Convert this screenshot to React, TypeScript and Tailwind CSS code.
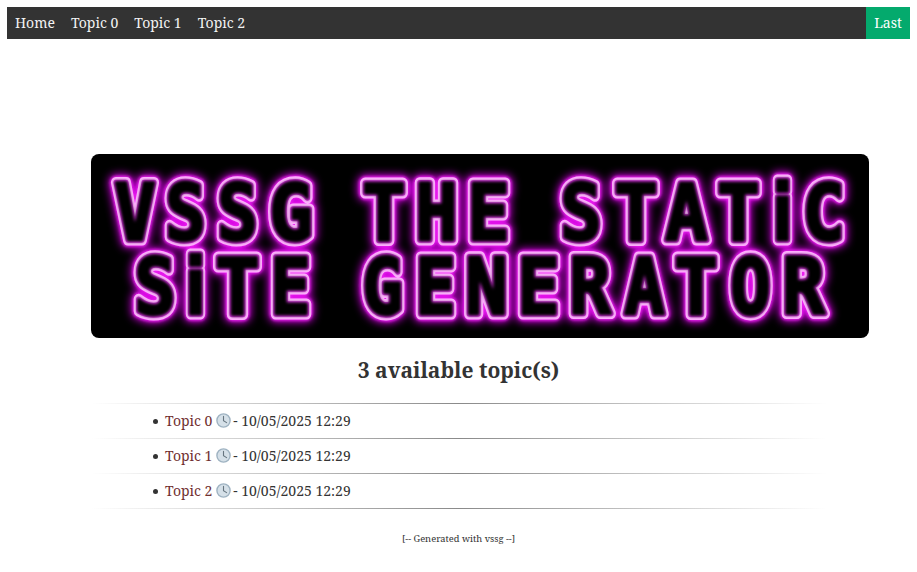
import React from "react";

const topics = ["Topic 0", "Topic 1", "Topic 2"];

// letter, left edge, right edge of the neon tube in the banner (page px minus banner origin)
const lineOne: [string, number, number][] = [
  ["V", 21, 67], ["S", 72, 117], ["S", 124, 169], ["G", 176, 224],
  ["T", 269, 317], ["H", 322, 369], ["E", 374, 421],
  ["S", 467, 513], ["T", 521, 569], ["A", 572, 619], ["T", 624, 671], ["i", 679, 704], ["C", 709, 756],
];
const lineTwo: [string, number, number][] = [
  ["S", 41, 87], ["i", 92, 117], ["T", 122, 171], ["E", 177, 222],
  ["G", 269, 314], ["E", 322, 367], ["N", 372, 419], ["E", 424, 471], ["R", 476, 522],
  ["A", 531, 576], ["T", 581, 629], ["O", 637, 682], ["R", 689, 736],
];

function NeonLine({ letters, y }: { letters: [string, number, number][]; y: number }) {
  return (
    <>
      {letters.map(([ch, left, right], i) => (
        <text
          key={i}
          x={left + 2}
          y={y}
          textLength={right - left - 4}
          lengthAdjust="spacingAndGlyphs"
          fontFamily={ch === "i" ? "'DejaVu Sans', sans-serif" : undefined}
        >
          {ch}
        </text>
      ))}
    </>
  );
}

function Banner() {
  return (
    <div className="ml-[84px] h-[184px] w-[778px] overflow-hidden rounded-lg bg-black">
      <svg width="778" height="184" viewBox="0 0 778 184" className="block">
        <defs>
          <filter id="halo" x="-10%" y="-10%" width="120%" height="120%">
            <feGaussianBlur stdDeviation="4" />
          </filter>
          <filter id="glow" x="-10%" y="-10%" width="120%" height="120%">
            <feGaussianBlur stdDeviation="1.4" />
          </filter>
          <filter id="soft" x="-10%" y="-10%" width="120%" height="120%">
            <feGaussianBlur stdDeviation="0.5" />
          </filter>
          <g id="neon" fontFamily="'DejaVu Sans Mono', monospace" fontWeight="700" fontSize="78" strokeLinejoin="round">
            <NeonLine letters={lineOne} y={86} />
            <NeonLine letters={lineTwo} y={160} />
          </g>
        </defs>
        <use href="#neon" fill="#000" stroke="#d000e0" strokeWidth="16" filter="url(#halo)" />
        <use href="#neon" fill="#000" stroke="#ec20f0" strokeWidth="13" filter="url(#glow)" />
        <use href="#neon" fill="#000" stroke="#ffb0ff" strokeWidth="11" filter="url(#soft)" />
        <use href="#neon" fill="#000" stroke="#e030e8" strokeWidth="5.6" filter="url(#soft)" />
        <use href="#neon" fill="#000" stroke="#000" strokeWidth="3.4" filter="url(#glow)" />
      </svg>
    </div>
  );
}

function ClockIcon() {
  return (
    <svg width="15" height="15" viewBox="0 0 15 15" className="mr-[-1.5px] inline-block align-[-2px]">
      <circle cx="7.5" cy="7.5" r="6.6" fill="#d5e0e8" stroke="#9fb3c2" strokeWidth="1.4" />
      <path d="M7.5 3.4V7.7L10.6 9.6" fill="none" stroke="#66757f" strokeWidth="1.1" strokeLinecap="round" />
    </svg>
  );
}

function Rule() {
  return <div className="mx-auto h-px w-[736px] bg-gradient-to-r from-transparent via-[#8a8a8a] to-transparent" />;
}

export default function App() {
  return (
    <div className="min-h-[572px] bg-white p-[7px] font-['Noto_Serif','DejaVu_Serif',serif] text-[14px] text-[#333]">
      <nav className="flex h-8 items-center bg-[#333] text-[#f2f2f2]">
        <a className="px-2 leading-8">Home</a>
        <a className="px-2 leading-8">Topic 0</a>
        <a className="px-2 leading-8">Topic 1</a>
        <a className="px-2 leading-8">Topic 2</a>
        <a className="ml-auto bg-[#04aa6d] px-2 leading-8 text-white">Last</a>
      </nav>

      <div className="pt-[115px]">
        <Banner />
      </div>

      <h1 className="mt-[17px] text-center text-[21px] font-bold leading-[30px]">3 available topic(s)</h1>

      <div className="mt-[18px]">
        <Rule />
        {topics.map((topic) => (
          <div key={topic}>
            <ul className="h-[34px] list-none pl-[158px]">
              <li className="relative leading-[34px]">
                <span className="absolute left-[-12px] top-[15px] h-[5px] w-[5px] rounded-full bg-[#333]" />
                <a className="text-[#703030]">{topic}</a> <ClockIcon /> - 10/05/2025 12:29
              </li>
            </ul>
            <Rule />
          </div>
        ))}
      </div>

      <p className="mt-[23px] text-center text-[9.33px] leading-[14px]">[-- Generated with vssg --]</p>
    </div>
  );
}
